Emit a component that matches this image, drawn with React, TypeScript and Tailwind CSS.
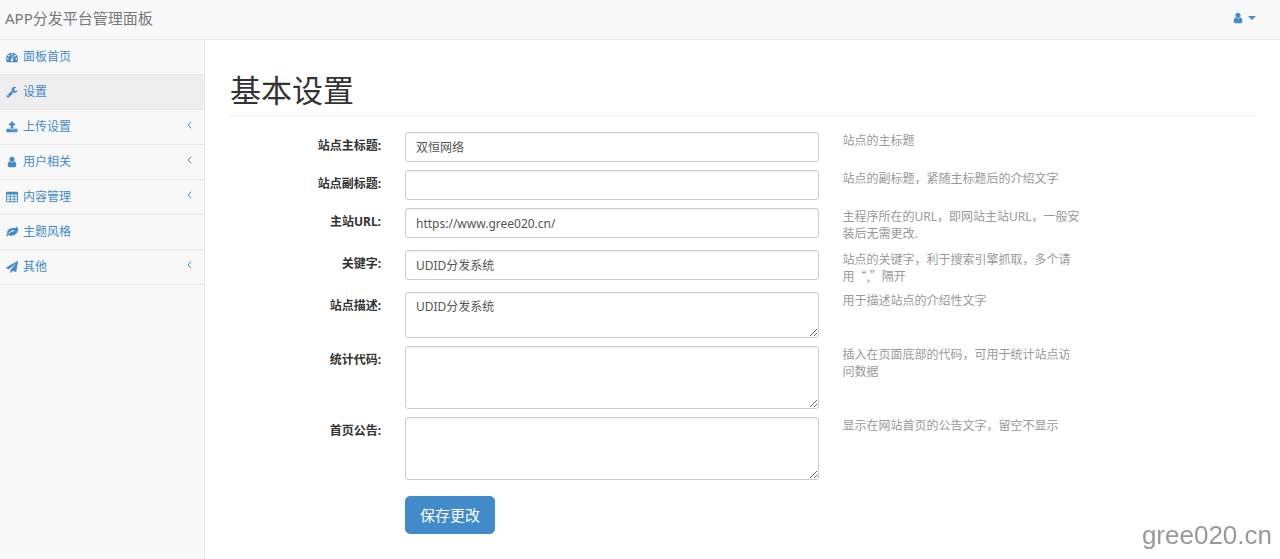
import { useState } from 'react';

const ICONS = {
  dashboard:
    'M384 1152q0-53-37.5-90.5t-90.5-37.5-90.5 37.5-37.5 90.5 37.5 90.5 90.5 37.5 90.5-37.5 37.5-90.5zm192-448q0-53-37.5-90.5t-90.5-37.5-90.5 37.5-37.5 90.5 37.5 90.5 90.5 37.5 90.5-37.5 37.5-90.5zm428 481l101-382q6-26-7.5-48.5t-38.5-29.5-48 6.5-30 39.5l-101 382q-60 5-107 43.5t-63 98.5q-20 77 20 146t117 89 146-20 89-117q16-60-6-117t-72-91zm660-33q0-53-37.5-90.5t-90.5-37.5-90.5 37.5-37.5 90.5 37.5 90.5 90.5 37.5 90.5-37.5 37.5-90.5zm-640-640q0-53-37.5-90.5t-90.5-37.5-90.5 37.5-37.5 90.5 37.5 90.5 90.5 37.5 90.5-37.5 37.5-90.5zm448 192q0-53-37.5-90.5t-90.5-37.5-90.5 37.5-37.5 90.5 37.5 90.5 90.5 37.5 90.5-37.5 37.5-90.5zm320 448q0 261-141 483-19 29-54 29h-1402q-35 0-54-29-141-221-141-483 0-182 71-348t191-286 286-191 348-71 348 71 286 191 191 286 71 348z',
  wrench:
    'M448 1472q0-26-19-45t-45-19-45 19-19 45 19 45 45 19 45-19 19-45zm644-420l-682 682q-37 37-90 37-52 0-91-37l-106-108q-38-36-38-90 0-53 38-91l681-681q39 98 114.5 173.5t173.5 114.5zm634-435q0 39-23 106-47 134-164.5 217.5t-258.5 83.5q-185 0-316.5-131.5t-131.5-316.5 131.5-316.5 316.5-131.5q58 0 121.5 16.5t107.5 46.5q16 11 16 28t-16 28l-293 169v224l193 107q5-3 79-48.5t135.5-81 70.5-35.5q15 0 23.5 10t8.5 25z',
  upload:
    'M1344 1472q0-26-19-45t-45-19-45 19-19 45 19 45 45 19 45-19 19-45zm256 0q0-26-19-45t-45-19-45 19-19 45 19 45 45 19 45-19 19-45zm128-224v320q0 40-28 68t-68 28h-1472q-40 0-68-28t-28-68v-320q0-40 28-68t68-28h427q21 56 70.5 92t110.5 36h256q61 0 110.5-36t70.5-92h427q40 0 68 28t28 68zm-325-648q-17 40-59 40h-256v448q0 26-19 45t-45 19h-256q-26 0-45-19t-19-45v-448h-256q-42 0-59-40-17-39 14-69l448-448q18-19 45-19t45 19l448 448q31 30 14 69z',
  user:
    'M1536 1399q0 109-62.5 187t-150.5 78h-854q-88 0-150.5-78t-62.5-187q0-85 8.5-160.5t31.5-152 58.5-131 94-89 134.5-34.5q131 128 313 128t313-128q76 0 134.5 34.5t94 89 58.5 131 31.5 152 8.5 160.5zm-256-887q0 159-112.5 271.5t-271.5 112.5-271.5-112.5-112.5-271.5 112.5-271.5 271.5-112.5 271.5 112.5 112.5 271.5z',
  table:
    'M160 128h1472q66 0 113 47t47 113v1216q0 66-47 113t-113 47h-1472q-66 0-113-47t-47-113v-1216q0-66 47-113t113-47zM128 512v256h448v-256zM704 512v256h448v-256zM1280 512v256h384v-256zM128 896v256h448v-256zM704 896v256h448v-256zM1280 896v256h384v-256zM128 1280v256h448v-256zM704 1280v256h448v-256zM1280 1280v256h384v-256z',
  leaf:
    'M1280 704q0-26-19-45t-45-19q-172 0-318 49.5t-259.5 134-235.5 219.5q-19 21-19 45 0 26 19 45t45 19q24 0 45-19 27-24 74-71t67-66q137-124 268.5-176t313.5-52q26 0 45-19t19-45zm512-198q0 95-20 193-46 224-184.5 383t-357.5 268q-214 108-438 108-148 0-286-47-15-5-88-42t-96-37q-16 0-39.5 32t-45 70-52.5 70-60 32q-43 0-63.5-17.5t-45.5-59.5q-2-4-6-11t-5.5-10-3-9.5-1.5-13.5q0-35 31-73.5t68-65.5 68-56 31-48q0-4-14-38t-16-44q-9-51-9-104 0-115 43.5-220t119-184.5 170.5-139 204-95.5q55-18 145-25.5t179.5-9 178.5-6 163.5-24 113.5-56.5l29.5-29.5 29.5-28 27-20 36.5-16 43.5-4.5q39 0 70.5 46t47.5 112 24 124 8 96z',
  plane:
    'M1764 11q33 24 27 64l-256 1536q-5 29-32 45-14 8-31 8-11 0-24-5l-453-185-242 295q-18 23-49 23-13 0-22-4-19-7-30.5-23.5t-11.5-36.5v-349l864-1059-1069 925-395-162q-37-14-40-55-2-40 32-59l1664-960q15-9 32-9 20 0 36 11z',
};

type IconName = keyof typeof ICONS;

interface MenuItem {
  label: string;
  icon: IconName;
  active?: boolean;
  children?: boolean;
}

const MENU: MenuItem[] = [
  { label: '面板首页', icon: 'dashboard' },
  { label: '设置', icon: 'wrench', active: true },
  { label: '上传设置', icon: 'upload', children: true },
  { label: '用户相关', icon: 'user', children: true },
  { label: '内容管理', icon: 'table', children: true },
  { label: '主题风格', icon: 'leaf' },
  { label: '其他', icon: 'plane', children: true },
];

interface Field {
  id: string;
  label: string;
  value: string;
  help: string;
  rows?: number;
  // full-width quotation marks come from the CJK face
  cjkHelp?: boolean;
}

const FIELDS: Field[] = [
  { id: 'title', label: '站点主标题:', value: '双恒网络', help: '站点的主标题' },
  { id: 'subtitle', label: '站点副标题:', value: '', help: '站点的副标题，紧随主标题后的介绍文字' },
  { id: 'url', label: '主站URL:', value: 'https://www.gree020.cn/', help: '主程序所在的URL，即网站主站URL，一般安装后无需更改.' },
  { id: 'keywords', label: '关键字:', value: 'UDID分发系统', help: '站点的关键字，利于搜索引擎抓取，多个请用“,”隔开', cjkHelp: true },
  { id: 'description', label: '站点描述:', value: 'UDID分发系统', help: '用于描述站点的介绍性文字', rows: 2 },
  { id: 'stats', label: '统计代码:', value: '', help: '插入在页面底部的代码，可用于统计站点访问数据', rows: 3 },
  { id: 'notice', label: '首页公告:', value: '', help: '显示在网站首页的公告文字，留空不显示', rows: 3 },
];

function Icon({ name }: { name: IconName }) {
  return (
    <svg viewBox="0 0 1792 1792" className="size-3 shrink-0" fill="currentColor" fillRule="evenodd" aria-hidden="true">
      <path d={ICONS[name]} />
    </svg>
  );
}

function FieldRow({ field }: { field: Field }) {
  const [value, setValue] = useState(field.value);
  const control =
    'block w-full rounded-[3px] border border-[#ccc] bg-white px-[10px] text-[#555] shadow-[inset_0_1px_1px_rgba(0,0,0,0.05)] outline-none focus:border-[#66afe9]';

  return (
    <div className="-mx-3 mb-2 grid grid-cols-12">
      <label htmlFor={field.id} className="col-span-2 px-3 pt-[5px] text-right font-bold text-[#333]">
        {field.label}
      </label>
      <div className="col-span-5 px-3">
        {field.rows ? (
          <textarea
            id={field.id}
            rows={field.rows}
            value={value}
            onChange={e => setValue(e.target.value)}
            className={`${control} py-[5px] ${field.rows === 2 ? 'h-[46px]' : 'h-[63px]'}`}
          />
        ) : (
          <input
            id={field.id}
            type="text"
            value={value}
            onChange={e => setValue(e.target.value)}
            className={`${control} h-[30px]`}
          />
        )}
      </div>
      <p className={`col-span-3 px-3 text-[#999] ${field.cjkHelp ? "font-['Noto_Sans_CJK_SC',sans-serif]" : ''}`}>
        {field.help}
      </p>
    </div>
  );
}

export default function App() {
  return (
    <div className="flex min-h-screen flex-col bg-white font-['Noto_Sans','Noto_Sans_CJK_SC',sans-serif] text-[12px] leading-[17px]">
      {/* Top bar */}
      <header className="flex h-10 items-center justify-between border-b border-[#e7e7e7] bg-[#f8f8f8] pr-6 pb-1 pl-[5px]">
        <a href="#" className="text-[15px] leading-5 text-[#777]">APP分发平台管理面板</a>
        <button type="button" aria-label="用户菜单" className="flex items-center gap-1 text-[#428bca]">
          <Icon name="user" />
          <svg viewBox="0 0 8 4" className="h-1 w-2" fill="currentColor" aria-hidden="true">
            <path d="M0 0h8L4 4z" />
          </svg>
        </button>
      </header>

      <div className="flex flex-1">
        {/* Sidebar */}
        <nav className="w-[205px] shrink-0 border-r border-[#e7e7e7] bg-[#f8f8f8]">
          <ul className="divide-y divide-[#e7e7e7] border-b border-[#e7e7e7]">
            {MENU.map(item => (
              <li key={item.label}>
                <a
                  href="#"
                  className={`flex h-[34px] items-center gap-[5px] pr-3 pb-px pl-[6px] text-[#428bca] hover:bg-[#eee] ${item.active ? 'bg-[#eee]' : ''}`}
                >
                  <Icon name={item.icon} />
                  <span className="flex-1">{item.label}</span>
                  {item.children && (
                    <svg viewBox="0 0 5 8" className="mb-1 h-2 w-[5px]" fill="none" stroke="currentColor" aria-hidden="true">
                      <path d="M4.2 0.8L1 4l3.2 3.2" />
                    </svg>
                  )}
                </a>
              </li>
            ))}
          </ul>
        </nav>

        {/* Settings form */}
        <main className="min-w-0 flex-1 pt-8 pr-6 pb-6 pl-[25px]">
          <h1 className="mb-4 border-b border-[#eee] pb-[7px] text-[31px] leading-9 text-[#333]">基本设置</h1>
          <form onSubmit={e => e.preventDefault()}>
            {FIELDS.map(f => <FieldRow key={f.id} field={f} />)}
            <div className="-mx-3 mt-4 grid grid-cols-12">
              <div className="col-span-5 col-start-3 px-3">
                <button
                  type="submit"
                  className="h-[38px] rounded-[5px] border border-[#428bca] bg-[#428bca] px-[14px] text-[15px] text-white hover:bg-[#3276b1]"
                >
                  保存更改
                </button>
              </div>
            </div>
          </form>
        </main>
      </div>

      <div className="pointer-events-none fixed right-2 bottom-2 font-['Liberation_Sans',sans-serif] text-[26px] leading-8 text-[#999]">
        gree020.cn
      </div>
    </div>
  );
}
